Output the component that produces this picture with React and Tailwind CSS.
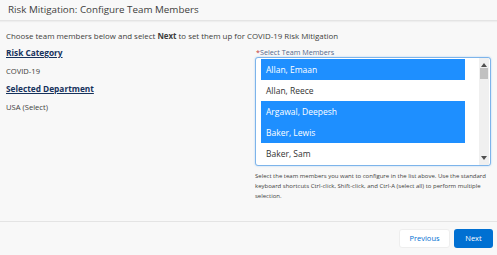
const members = [
  { name: "Allan, Emaan", selected: true },
  { name: "Allan, Reece", selected: false },
  { name: "Argawal, Deepesh", selected: true },
  { name: "Baker, Lewis", selected: true },
  { name: "Baker, Sam", selected: false },
];

const MemberList = () => (
  <div className="mt-[1px] flex h-[109px] w-[236px] rounded-[3px] border border-[#7db4ea] bg-white shadow-[0_0_2px_#a9cdf2]">
    <div className="w-[209px] pl-[5px] pt-[1px]">
      {members.map((m) => (
        <div
          key={m.name}
          className={
            "h-[21px] pl-[5px] text-[8.5px] leading-[21px] " +
            (m.selected ? "bg-[#1e8fff] text-white" : "text-[#333333]")
          }
        >
          {m.name}
        </div>
      ))}
    </div>
    <div className="ml-auto mr-[1px] flex w-[10px] flex-col items-center bg-[#f0f0f0] py-[5px]">
      <svg width="6" height="4" viewBox="0 0 6 4">
        <path d="M3 0L6 4H0z" fill="#505050" />
      </svg>
      <div className="mt-[1px] h-[11px] w-[8px] bg-[#c1c1c1]" />
      <div className="flex-1" />
      <svg width="6" height="4" viewBox="0 0 6 4">
        <path d="M0 0h6L3 4z" fill="#505050" />
      </svg>
    </div>
  </div>
);

export default function App() {
  return (
    <div className="flex h-[255px] w-[497px] flex-col bg-[#f8f8f8] font-['Open_Sans',sans-serif] text-[#3e3e3c]">
      {/* Header */}
      <div className="h-[21px] border-b border-[#e4e4e4] px-[8px] text-[9.8px] leading-[20px] text-[#3e3e3c] shadow-[0_1px_1px_#eeeeee]">
        Risk Mitigation: Configure Team Members
      </div>

      {/* Body */}
      <div className="flex-1 px-[6px] pt-[10px]">
        <p className="text-[7.9px] leading-[10px]">
          Choose team members below and select <b>Next</b> to set them up for COVID-19 Risk Mitigation
        </p>
        <div className="mt-[3px] flex">
          <div className="w-[251px]">
            <div className="h-[18px] text-[8.3px] font-bold leading-[18px] text-[#16325c] underline">Risk Category</div>
            <div className="h-[18px] text-[7.6px] leading-[18px]">COVID-19</div>
            <div className="h-[18px] text-[8.3px] font-bold leading-[18px] text-[#16325c] underline">Selected Department</div>
            <div className="h-[18px] text-[7.6px] leading-[18px]">USA (Select)</div>
          </div>
          <div className="w-[236px]">
            <div className="mt-[4px] h-[8px] pl-[1px] text-[7.2px] leading-[8px] text-[#54698d]">
              <span className="text-[#c23934]">*</span>Select Team Members
            </div>
            <MemberList />
            <p className="mt-[5px] text-[6px] leading-[10px] text-[#3e3e3c]">
              Select the team members you want to configure in the list above. Use the standard keyboard shortcuts Ctrl-click, Shift-click, and Ctrl-A (select all) to perform multiple selection.
            </p>
          </div>
        </div>
      </div>

      {/* Footer */}
      <div className="flex h-[34px] items-center justify-end gap-[4px] border-t border-[#e4e4e4] pr-[4px]">
        <button className="h-[19px] w-[51px] rounded-[3px] border border-[#eeeeee] bg-white text-[7.5px] text-[#0070d2]">
          Previous
        </button>
        <button className="h-[19px] w-[39px] rounded-[3px] bg-[#0070d2] text-[7.5px] text-white">
          Next
        </button>
      </div>
    </div>
  );
}
